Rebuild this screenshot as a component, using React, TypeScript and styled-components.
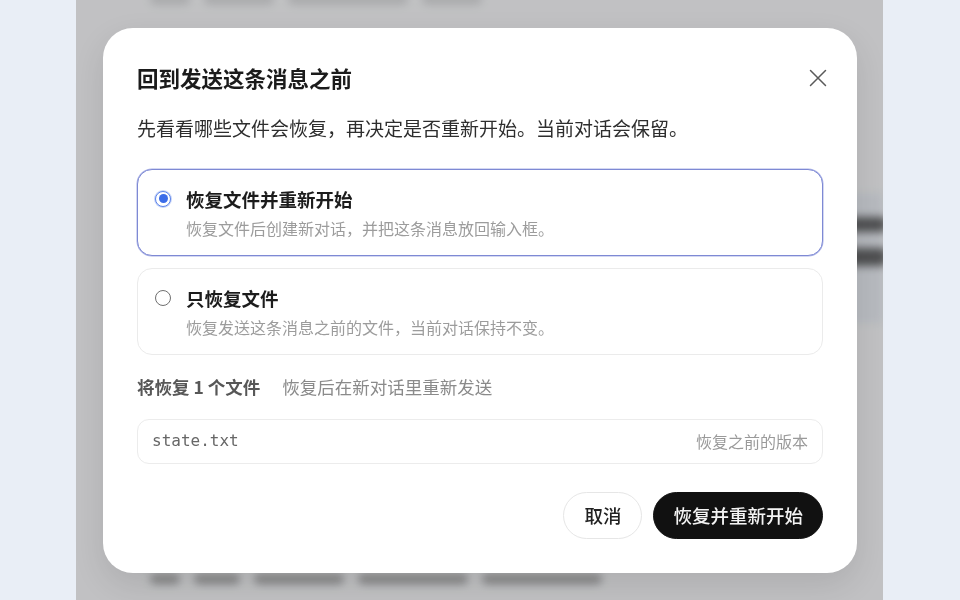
import React, { useState } from 'react';
import styled, { createGlobalStyle } from 'styled-components';

const GlobalStyle = createGlobalStyle`
  html, body {
    margin: 0;
    padding: 0;
    background: #e9eef6;
  }

  body {
    font-family: "Noto Sans CJK SC", "Noto Sans", sans-serif;
    -webkit-font-smoothing: antialiased;
  }

  * {
    box-sizing: border-box;
  }
`;

const Page = styled.div`
  display: grid;
  grid-template-columns: 76px 807px 1fr;
  height: 100vh;
  overflow: hidden;
  background: #e9eef6;
`;

const Side = styled.div`
  background: #e9eef6;
`;

const ChatColumn = styled.div`
  position: relative;
  background: #fbfcfe;
  overflow: hidden;
`;

const ChatFeed = styled.div`
  display: flex;
  flex-direction: column;
  height: 100%;
  padding: 0 0 0 74px;
  filter: blur(4px);
`;

const BlurLine = styled.div<{ $top?: number; $shade?: number }>`
  display: flex;
  gap: 14px;
  margin-top: ${(p) => p.$top ?? 0}px;
  opacity: ${(p) => p.$shade ?? 0.6};
`;

const Word = styled.span<{ $w: number; $h?: number }>`
  display: block;
  flex: none;
  width: ${(p) => p.$w}px;
  height: ${(p) => p.$h ?? 12}px;
  border-radius: 5px;
  background: #3a3a3a;
`;

const Bubble = styled.div`
  align-self: flex-end;
  width: 160px;
  height: 130px;
  margin-top: 188px;
  padding: 24px 0 0 14px;
  display: flex;
  flex-direction: column;
  gap: 16px;
  border-radius: 16px 0 0 16px;
  background: #eef2f9;
`;

const Spacer = styled.div`
  flex: 1;
`;

const Dim = styled.div`
  position: absolute;
  inset: 0;
  background: rgba(0, 0, 0, 0.23);
`;

const Overlay = styled.div`
  position: fixed;
  inset: 0;
  display: flex;
  align-items: center;
  justify-content: center;
`;

const Dialog = styled.div`
  width: 754px;
  padding: 34px;
  border-radius: 30px;
  background: #ffffff;
  box-shadow: 0 12px 32px rgba(0, 0, 0, 0.1);
  display: flex;
  flex-direction: column;
`;

const Header = styled.div`
  display: flex;
  align-items: center;
  justify-content: space-between;
`;

const Title = styled.h2`
  margin: 0;
  font-size: 21.5px;
  line-height: 32px;
  font-weight: 700;
  color: #1b1b1b;
`;

const CloseButton = styled.button`
  display: flex;
  align-items: center;
  justify-content: center;
  width: 26px;
  height: 26px;
  margin-right: -8px;
  padding: 0;
  border: none;
  background: transparent;
  color: #5a5a5a;
  cursor: pointer;
`;

const Lead = styled.p`
  margin: 20px 0 0;
  font-size: 19px;
  line-height: 28px;
  color: #2e2e2e;
`;

const Options = styled.div`
  display: flex;
  flex-direction: column;
  gap: 12px;
  margin-top: 27px;
`;

const Option = styled.label<{ $active: boolean }>`
  display: flex;
  align-items: flex-start;
  gap: 15px;
  padding: 15px 17px;
  border: 1px solid ${(p) => (p.$active ? '#7e89d4' : '#ebebeb')};
  border-radius: 15px;
  background: #fff;
  box-shadow: ${(p) => (p.$active ? '0 0 0 0.5px #a9b1e6' : 'none')};
  cursor: pointer;
`;

const Radio = styled.span<{ $checked: boolean }>`
  position: relative;
  flex: none;
  width: 16px;
  height: 16px;
  margin-top: 6px;
  border-radius: 50%;
  border: 1.5px solid ${(p) => (p.$checked ? '#5b83ea' : '#6f6f6f')};
  background: #fff;
  box-shadow: ${(p) => (p.$checked ? '0 0 0 1px #c9d6f8' : 'none')};

  &::after {
    content: '';
    position: absolute;
    inset: 2.5px;
    border-radius: 50%;
    background: ${(p) => (p.$checked ? '#3b6ce8' : 'transparent')};
  }
`;

const OptionText = styled.div`
  display: flex;
  flex-direction: column;
  gap: 3px;
`;

const OptionTitle = styled.div`
  font-size: 18.5px;
  line-height: 28px;
  font-weight: 700;
  color: #1c1c1c;
`;

const OptionDesc = styled.div`
  font-size: 16px;
  line-height: 24px;
  color: #9c9c9c;
`;

const Summary = styled.div`
  display: flex;
  align-items: baseline;
  gap: 22px;
  margin-top: 19px;
  line-height: 26px;
`;

const Count = styled.span`
  font-size: 17.5px;
  font-weight: 700;
  color: #575757;
`;

const Hint = styled.span`
  font-size: 17.5px;
  color: #8a8a8a;
`;

const FileRow = styled.div`
  display: flex;
  align-items: center;
  justify-content: space-between;
  height: 45px;
  margin-top: 19px;
  padding: 0 14px;
  border: 1px solid #ececec;
  border-radius: 12px;
  background: #fff;
`;

const FileName = styled.span`
  font-family: "DejaVu Sans Mono", "Liberation Mono", monospace;
  font-size: 16px;
  color: #676767;
  margin-top: -2px;
`;

const FileNote = styled.span`
  font-size: 16px;
  color: #9a9a9a;
`;

const Actions = styled.div`
  display: flex;
  justify-content: flex-end;
  gap: 11px;
  margin-top: 28px;
`;

const Button = styled.button<{ $primary?: boolean }>`
  height: 47px;
  padding: 0 ${(p) => (p.$primary ? 19 : 20)}px;
  border-radius: 24px;
  border: 1px solid ${(p) => (p.$primary ? '#111' : '#e6e6e6')};
  background: ${(p) => (p.$primary ? '#111111' : '#ffffff')};
  color: ${(p) => (p.$primary ? '#f4f4f4' : '#222')};
  font-family: inherit;
  font-size: 18.5px;
  font-weight: 500;
  cursor: pointer;
`;

const CloseIcon = () => (
  <svg width="18" height="18" viewBox="0 0 18 18" fill="none">
    <path d="M1.5 1.5 16.5 16.5M16.5 1.5 1.5 16.5" stroke="currentColor" strokeWidth="1.5" strokeLinecap="round" />
  </svg>
);

const choices = [
  {
    id: 'restart',
    title: '恢复文件并重新开始',
    desc: '恢复文件后创建新对话，并把这条消息放回输入框。',
  },
  {
    id: 'files',
    title: '只恢复文件',
    desc: '恢复发送这条消息之前的文件，当前对话保持不变。',
  },
];

export default function App() {
  const [mode, setMode] = useState('restart');

  return (
    <>
      <GlobalStyle />
      <Page>
        <Side />
        <ChatColumn>
          <ChatFeed>
            <BlurLine $top={-7} $shade={0.15}>
              <Word $w={40} />
              <Word $w={70} />
              <Word $w={120} />
              <Word $w={60} />
            </BlurLine>
            <Bubble>
              <BlurLine $shade={0.75}>
                <Word $w={150} $h={15} />
              </BlurLine>
              <BlurLine $shade={0.75}>
                <Word $w={150} $h={18} />
              </BlurLine>
            </Bubble>
            <Spacer />
            <BlurLine $shade={0.4}>
              <Word $w={30} $h={10} />
              <Word $w={46} $h={10} />
              <Word $w={90} $h={10} />
              <Word $w={110} $h={10} />
              <Word $w={120} $h={10} />
            </BlurLine>
            <div style={{ height: 16 }} />
          </ChatFeed>
          <Dim />
        </ChatColumn>
        <Side />
      </Page>

      <Overlay>
        <Dialog role="dialog" aria-modal="true">
          <Header>
            <Title>回到发送这条消息之前</Title>
            <CloseButton aria-label="关闭">
              <CloseIcon />
            </CloseButton>
          </Header>
          <Lead>先看看哪些文件会恢复，再决定是否重新开始。当前对话会保留。</Lead>

          <Options>
            {choices.map((c) => (
              <Option key={c.id} $active={mode === c.id} onClick={() => setMode(c.id)}>
                <Radio $checked={mode === c.id} />
                <OptionText>
                  <OptionTitle>{c.title}</OptionTitle>
                  <OptionDesc>{c.desc}</OptionDesc>
                </OptionText>
              </Option>
            ))}
          </Options>

          <Summary>
            <Count>将恢复 1 个文件</Count>
            <Hint>恢复后在新对话里重新发送</Hint>
          </Summary>

          <FileRow>
            <FileName>state.txt</FileName>
            <FileNote>恢复之前的版本</FileNote>
          </FileRow>

          <Actions>
            <Button>取消</Button>
            <Button $primary>恢复并重新开始</Button>
          </Actions>
        </Dialog>
      </Overlay>
    </>
  );
}
